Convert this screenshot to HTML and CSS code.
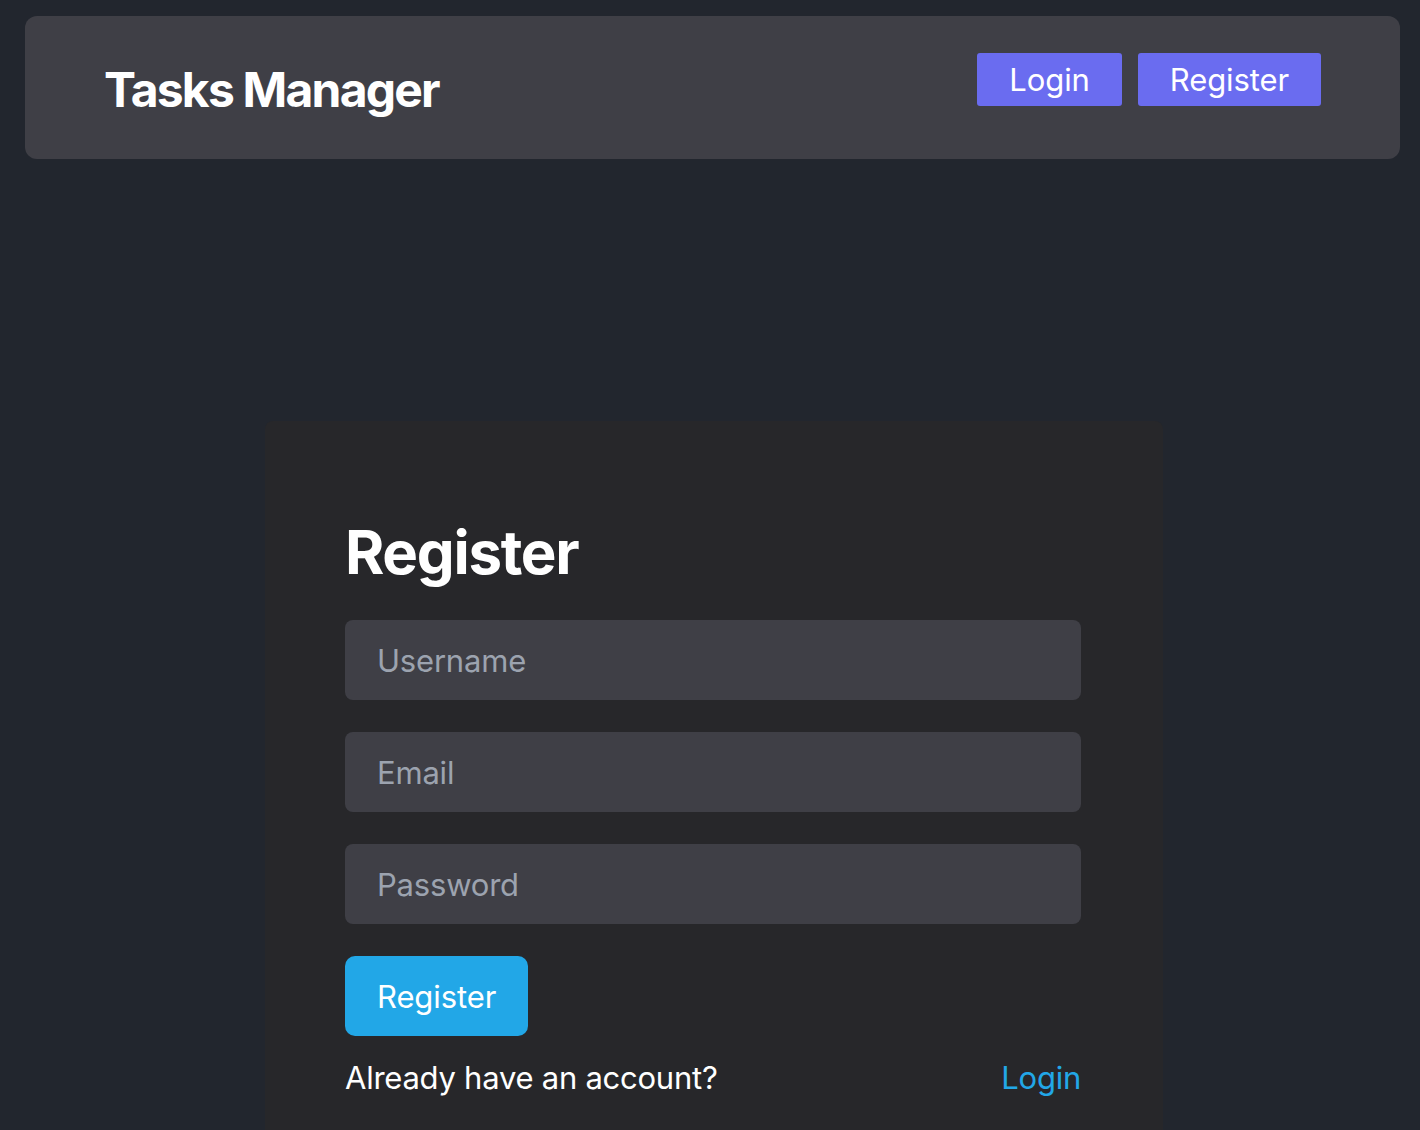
FILE: index.html
```html
<!DOCTYPE html>
<html lang="en">
<head>
<meta charset="utf-8">
<title>Tasks Manager</title>
<link rel="stylesheet" href="styles.css">
</head>
<body>
<header class="topbar">
  <h1 class="brand">Tasks Manager</h1>
  <nav class="nav">
    <a class="nav-btn" href="#">Login</a>
    <a class="nav-btn" href="#">Register</a>
  </nav>
</header>
<main class="main">
  <section class="card">
    <h2 class="card-title">Register</h2>
    <form class="form">
      <input class="field" type="text" placeholder="Username">
      <input class="field" type="email" placeholder="Email">
      <input class="field" type="password" placeholder="Password">
      <button class="submit" type="button">Register</button>
      <div class="switch">
        <span>Already have an account?</span>
        <a class="switch-link" href="#">Login</a>
      </div>
    </form>
  </section>
</main>
</body>
</html>
```
FILE: styles.css
```css
* { box-sizing: border-box; }
html, body { height: 100%; }
body {
  margin: 0;
  background: #22262e;
  color: #fff;
  font-family: Inter, "Noto Sans", sans-serif;
  overflow: hidden;
}
.topbar {
  margin: 16px 20px 0 25px;
  height: 143px;
  background: #3f3f46;
  border-radius: 12px;
  padding: 0 79px 0 79px;
  display: flex;
  align-items: center;
  justify-content: space-between;
}
.brand {
  margin: 4px 0 0;
  font-size: 48px;
  line-height: 48px;
  font-weight: 700;
  letter-spacing: -1.8px;
}
.nav {
  display: flex;
  gap: 16px;
  padding-bottom: 16px;
}
.nav-btn {
  display: flex;
  align-items: center;
  justify-content: center;
  height: 53px;
  padding: 0 32px;
  background: #6a6cf0;
  color: #fff;
  border-radius: 3px;
  text-decoration: none;
  font-size: 31px;
  letter-spacing: -0.1px;
}
.main {
  display: flex;
  justify-content: center;
  padding: 262px 0 0 8px;
}
.card {
  width: 898px;
  min-height: 800px;
  background: #27272a;
  border-radius: 8px;
  padding: 101px 82px 0 80px;
}
.card-title {
  margin: 0 0 38px;
  font-size: 60px;
  line-height: 60px;
  font-weight: 700;
  letter-spacing: -1.3px;
}
.form {
  display: flex;
  flex-direction: column;
  align-items: flex-start;
}
.field {
  width: 100%;
  height: 80px;
  margin-bottom: 32px;
  border: 0;
  border-radius: 8px;
  background: #3f3f46;
  color: #fff;
  padding: 0 32px;
  font-family: inherit;
  font-size: 31px;
  letter-spacing: -0.2px;
  outline: none;
}
.field::placeholder { color: #9ca3af; }
.submit {
  height: 80px;
  padding: 0 32px;
  border: 0;
  border-radius: 10px;
  background: #22a7e7;
  color: #fff;
  font-family: inherit;
  font-size: 31px;
  letter-spacing: -0.1px;
}
.switch {
  width: 100%;
  display: flex;
  justify-content: space-between;
  margin-top: 22px;
  font-size: 31px;
  line-height: 40px;
  letter-spacing: -0.25px;
}
.switch-link {
  color: #22a7e7;
  text-decoration: none;
}
```
